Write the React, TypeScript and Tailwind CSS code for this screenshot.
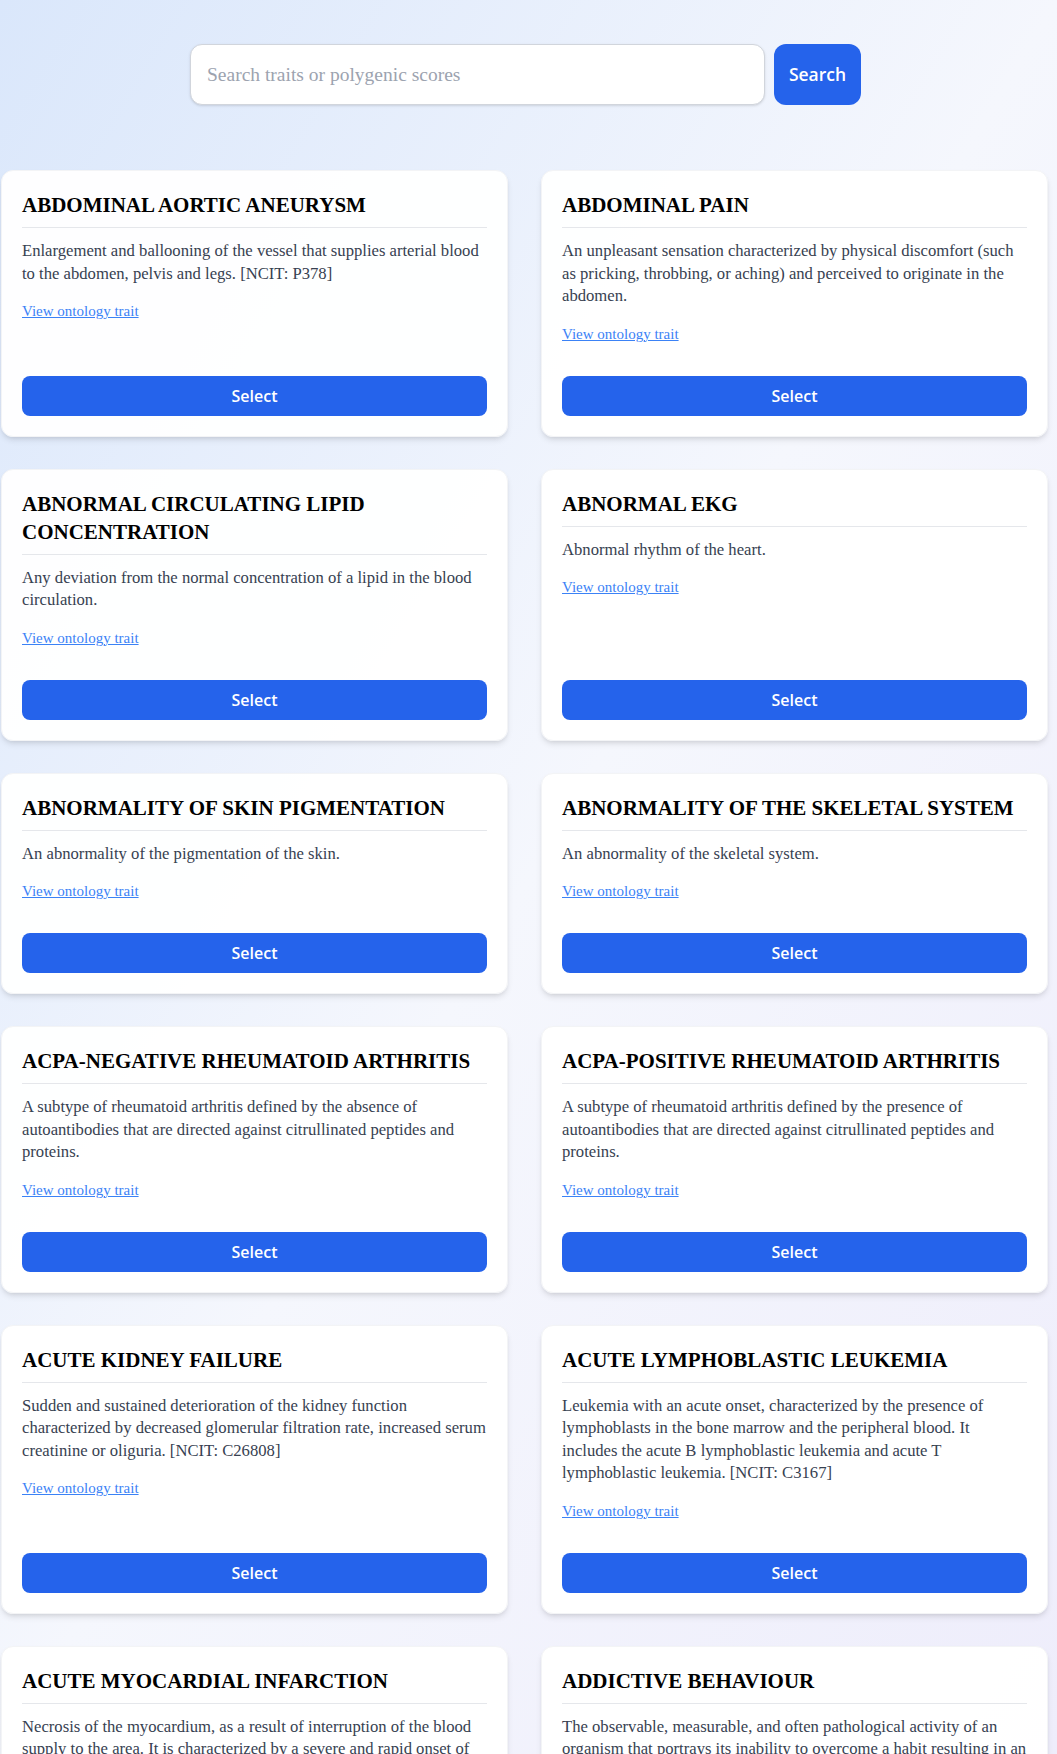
import { useState } from "react";

type Trait = { id: string; label: string; description: string };

const TRAITS: Trait[] = [
  { id: "EFO_0004214", label: "Abdominal Aortic Aneurysm", description: "Enlargement and ballooning of the vessel that supplies arterial blood to the abdomen, pelvis and legs. [NCIT: P378]" },
  { id: "HP_0002027", label: "Abdominal Pain", description: "An unpleasant sensation characterized by physical discomfort (such as pricking, throbbing, or aching) and perceived to originate in the abdomen." },
  { id: "HP_0003119", label: "Abnormal Circulating Lipid Concentration", description: "Any deviation from the normal concentration of a lipid in the blood circulation." },
  { id: "EFO_0004326", label: "Abnormal EKG", description: "Abnormal rhythm of the heart." },
  { id: "HP_0001000", label: "Abnormality of skin pigmentation", description: "An abnormality of the pigmentation of the skin." },
  { id: "HP_0000924", label: "Abnormality of the skeletal system", description: "An abnormality of the skeletal system." },
  { id: "EFO_0009459", label: "ACPA-negative rheumatoid arthritis", description: "A subtype of rheumatoid arthritis defined by the absence of autoantibodies that are directed against citrullinated peptides and proteins." },
  { id: "EFO_0009460", label: "ACPA-positive rheumatoid arthritis", description: "A subtype of rheumatoid arthritis defined by the presence of autoantibodies that are directed against citrullinated peptides and proteins." },
  { id: "EFO_0003884", label: "Acute kidney failure", description: "Sudden and sustained deterioration of the kidney function characterized by decreased glomerular filtration rate, increased serum creatinine or oliguria. [NCIT: C26808]" },
  { id: "EFO_0000220", label: "Acute lymphoblastic leukemia", description: "Leukemia with an acute onset, characterized by the presence of lymphoblasts in the bone marrow and the peripheral blood. It includes the acute B lymphoblastic leukemia and acute T lymphoblastic leukemia. [NCIT: C3167]" },
  { id: "EFO_0000612", label: "Acute myocardial infarction", description: "Necrosis of the myocardium, as a result of interruption of the blood supply to the area. It is characterized by a severe and rapid onset of symptoms that may include chest pain, often radiating to the left arm. [NCIT: C27996]" },
  { id: "EFO_0004347", label: "Addictive behaviour", description: "The observable, measurable, and often pathological activity of an organism that portrays its inability to overcome a habit resulting in an uncontrollable craving for the substance or activity." },
];

const SERIF = "font-['Liberation_Serif','Times_New_Roman',serif]";
const SANS = "font-['Open_Sans','Noto_Sans',sans-serif]";

function TraitCard({ trait }: { trait: Trait }) {
  return (
    <div className="flex flex-col rounded-xl border border-gray-100 bg-white/95 p-5 shadow-md">
      <h3 className={`${SERIF} border-b border-gray-200 pb-2 mb-3 text-[21px] leading-7 font-bold uppercase text-black`}>
        {trait.label}
      </h3>
      <p className={`${SERIF} text-[16.65px] leading-[22.5px] text-[#374151]`}>{trait.description}</p>
      <a
        href="#"
        className={`${SERIF} mt-4 self-start text-[15px] leading-5 text-[#3b82f6] underline`}
      >
        View ontology trait
      </a>
      <div className="flex-1 min-h-8" />
      <button className={`${SANS} h-10 w-full rounded-lg bg-[#2563eb] text-base font-semibold text-white`}>
        Select
      </button>
    </div>
  );
}

export default function App() {
  const [query, setQuery] = useState("");

  return (
    <div className="h-[1754px] overflow-hidden bg-linear-to-br from-[#dae7fb] via-[#f5f7fd] to-[#eeedfb]">
      <div className="w-[1051px]">
        {/* Search */}
        <div className="mx-auto mt-[44px] flex w-[671px] gap-[9px]">
          <input
            value={query}
            onChange={(e) => setQuery(e.target.value)}
            placeholder="Search traits or polygenic scores"
            className={`${SERIF} h-[61px] flex-1 rounded-xl border border-gray-300 bg-white px-4 text-[19.5px] text-gray-800 shadow-sm placeholder:text-[#9ca3af] outline-none`}
          />
          <button className={`${SANS} h-[61px] w-[87px] rounded-xl bg-[#2563eb] text-[17.5px] font-semibold text-white`}>
            Search
          </button>
        </div>

        {/* Traits */}
        <div className="mt-[65px] ml-px grid w-[1047px] grid-cols-2 gap-x-[33px] gap-y-8">
          {TRAITS.map((t) => (
            <TraitCard key={t.id} trait={t} />
          ))}
        </div>
      </div>
    </div>
  );
}
